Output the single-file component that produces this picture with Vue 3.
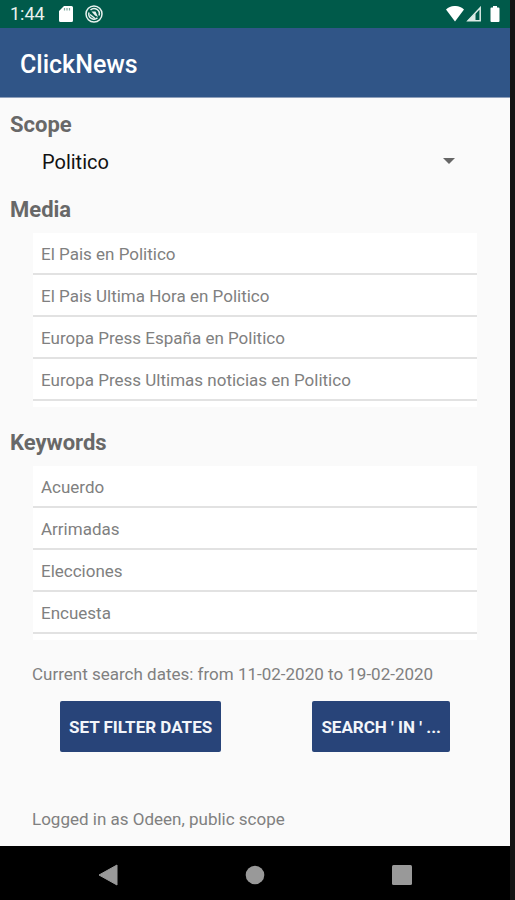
<template>
  <div class="screen">
    <div class="status-bar">
      <span class="clock">1:44</span>
      <svg class="icon-card" width="14" height="16" viewBox="0 0 14 16">
        <path d="M5 0h7.500a1.500 1.500 0 0 1 1.500 1.500v13a1.500 1.500 0 0 1-1.500 1.500h-11A1.500 1.500 0 0 1 0 14.500V5z" fill="#fff" />
        <path d="M5.500 2v2.500M8 2v2.500M10.500 2v2.500" stroke="#7fa99f" stroke-width="1.200" />
      </svg>
      <svg class="icon-sync" width="18" height="18" viewBox="0 0 18 18" fill="none" stroke="#e9f2ef">
        <circle cx="9" cy="9" r="8" stroke-width="1.500" />
        <path d="M12.500 12.800A5.200 5.200 0 0 1 4 7.500M5.500 5A5.200 5.200 0 0 1 14 10.500" stroke-width="1.500" />
        <path d="M6.500 6.500h4l2.500 5.500-3-1.500z" fill="#e9f2ef" stroke="none" />
        <path d="M5 9.500l5 4" stroke-width="1.400" />
      </svg>
      <svg class="icon-signals" width="54" height="16" viewBox="0 0 54 16">
        <path d="M0 3.500C5-1.200 13-1.200 18 3.500L9 15.500z" fill="#fff" />
        <path d="M34.200 1.800V14.800H22z" fill="none" stroke="#dcebe6" stroke-width="1.500" />
        <path d="M29.500 7.500V14.800H21.500z" fill="#dcebe6" />
        <path d="M47 0h4v1.500h1.500a1 1 0 0 1 1 1V15a1 1 0 0 1-1 1h-7a1 1 0 0 1-1-1V2.500a1 1 0 0 1 1-1H47z" fill="#fff" />
      </svg>
    </div>

    <header class="app-bar">
      <h1>ClickNews</h1>
    </header>

    <main class="content">
      <label class="section-title" for="scope">Scope</label>
      <div class="spinner">
        <select id="scope" v-model="scope">
          <option v-for="s in scopes" :key="s" :value="s">{{ s }}</option>
        </select>
        <svg class="arrow" width="12" height="6" viewBox="0 0 12 6">
          <path d="M0 0h12L6 6z" fill="#666" />
        </svg>
      </div>

      <h2 class="section-title">Media</h2>
      <ul class="list">
        <li v-for="item in media" :key="item">{{ item }}</li>
      </ul>

      <h2 class="section-title">Keywords</h2>
      <ul class="list">
        <li v-for="item in keywords" :key="item">{{ item }}</li>
      </ul>

      <p class="note">Current search dates: from {{ dateFrom }} to {{ dateTo }}</p>
      <div class="actions">
        <button type="button">SET FILTER DATES</button>
        <button type="button">SEARCH ' IN ' ...</button>
      </div>

      <p class="note session">Logged in as {{ user }}, public scope</p>
    </main>

    <nav class="nav-bar">
      <button type="button" aria-label="Back">
        <svg width="20" height="22" viewBox="0 0 20 22">
          <path d="M19 1v20L1 11z" fill="#999" stroke="#999" stroke-linejoin="round" />
        </svg>
      </button>
      <button type="button" aria-label="Home">
        <svg width="20" height="20" viewBox="0 0 20 20">
          <circle cx="10" cy="10" r="9.300" fill="#999" />
        </svg>
      </button>
      <button type="button" aria-label="Recents">
        <svg width="20" height="20" viewBox="0 0 20 20">
          <rect width="20" height="20" rx="1.500" fill="#999" />
        </svg>
      </button>
    </nav>
  </div>
</template>

<script setup>
import { ref } from 'vue'

const scopes = ['Politico']
const scope = ref('Politico')

const media = [
  'El Pais en Politico',
  'El Pais Ultima Hora en Politico',
  'Europa Press España en Politico',
  'Europa Press Ultimas noticias en Politico'
]

const keywords = ['Acuerdo', 'Arrimadas', 'Elecciones', 'Encuesta']

const dateFrom = ref('11-02-2020')
const dateTo = ref('19-02-2020')
const user = ref('Odeen')
</script>

<style>
body {
  margin: 0;
  background: #141414;
}
</style>

<style scoped>
.screen {
  box-sizing: border-box;
  min-height: 100vh;
  display: flex;
  flex-direction: column;
  border-right: 5px solid #141414;
  background: #fafafa;
  color: #808080;
  font-family: Roboto, "Liberation Sans", sans-serif;
}

.status-bar {
  display: flex;
  align-items: center;
  height: 28px;
  padding: 0 10px;
  background: #005a4a;
}

.clock {
  color: #e9f2ef;
  font-size: 18px;
  line-height: 30px;
}

.icon-card {
  margin-left: 14px;
}

.icon-sync {
  margin-left: 12px;
}

.icon-signals {
  margin-left: auto;
}

.app-bar {
  box-sizing: border-box;
  height: 70px;
  padding: 4px 20px 0;
  display: flex;
  align-items: center;
  background: #305587;
  border-bottom: 1px solid #8e9fba;
}

.app-bar h1 {
  margin: 0;
  color: #fff;
  font-size: 25px;
  font-weight: 500;
}

.content {
  flex: 1;
  display: flex;
  flex-direction: column;
  padding: 13px 0 15px;
}

.section-title {
  margin: 0 10px;
  color: #686868;
  font-size: 22px;
  font-weight: 700;
  line-height: 28px;
}

.spinner {
  position: relative;
  margin: 3px 33px 14px;
}

.spinner select {
  appearance: none;
  display: block;
  width: 100%;
  height: 40px;
  padding: 0 40px 0 9px;
  border: none;
  background: transparent;
  color: #111;
  font-family: inherit;
  font-size: 20px;
}

.arrow {
  position: absolute;
  top: 16px;
  right: 22px;
  pointer-events: none;
}

.list {
  margin: 9px 33px 22px;
  padding: 0 0 6px;
  list-style: none;
  background: #fff;
}

.list li {
  box-sizing: border-box;
  height: 42px;
  padding: 0 8px;
  border-bottom: 2px solid #e2e2e2;
  font-size: 17px;
  line-height: 42px;
}

.note {
  margin: 0 32px;
  font-size: 17px;
  line-height: 24px;
}

.actions {
  display: flex;
  justify-content: space-between;
  margin: 15px 60px;
}

.actions button {
  height: 51px;
  padding: 0 9px;
  border: none;
  border-radius: 2px;
  background: #284479;
  color: #f2f5fa;
  font-family: inherit;
  font-size: 17px;
  font-weight: 700;
}

.session {
  margin-top: auto;
}

.nav-bar {
  box-sizing: border-box;
  display: flex;
  justify-content: space-between;
  align-items: center;
  height: 54px;
  padding: 4px 84px 0;
  background: #000;
}

.nav-bar button {
  display: flex;
  align-items: center;
  justify-content: center;
  width: 48px;
  height: 48px;
  padding: 0;
  border: none;
  background: none;
}
</style>
